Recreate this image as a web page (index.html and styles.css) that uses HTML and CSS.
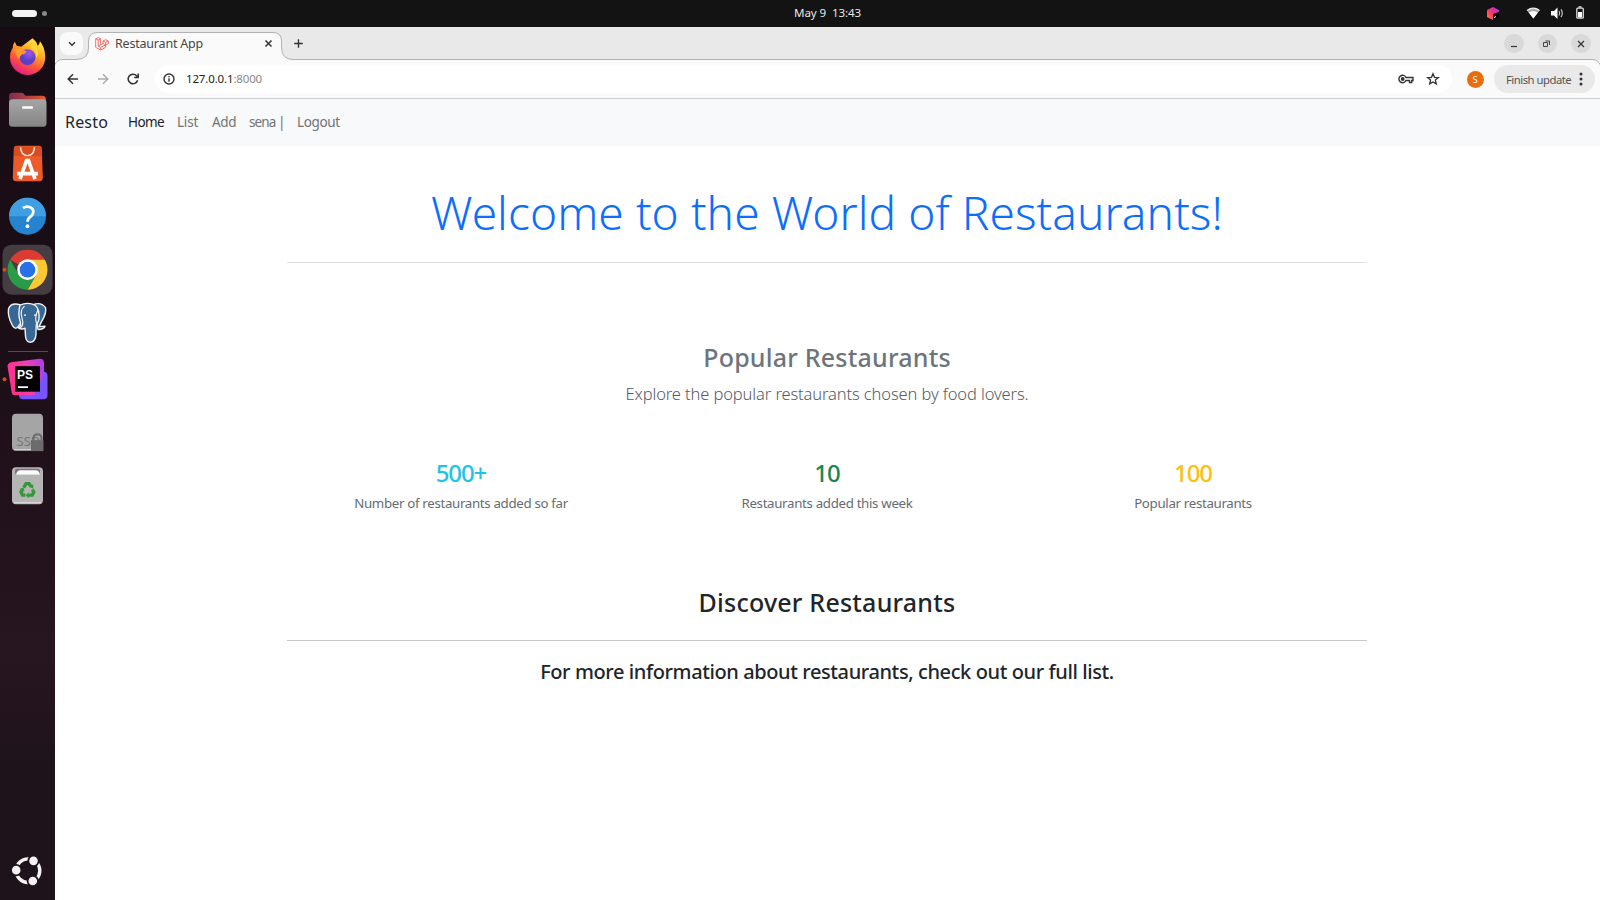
FILE: index.html
```html
<!DOCTYPE html>
<html lang="en">
<head>
<meta charset="utf-8">
<title>Restaurant App</title>
<link rel="stylesheet" href="styles.css">
</head>
<body>
<div class="desktop">
  <header class="topbar">
    <div class="spaces"><i class="pill"></i><i class="dot"></i></div>
    <div class="clock">May 9&nbsp; 13:43</div>
    <svg class="tray" width="120" height="27" viewBox="0 0 120 27">
      <defs><linearGradient id="tb" x1="0" y1="1" x2="1" y2="0"><stop offset="0" stop-color="#ff8a35"/><stop offset=".45" stop-color="#fb3569"/><stop offset="1" stop-color="#a02ff5"/></linearGradient></defs>
      <path d="M7 10 13 7l6 3v3l-6 3v4l-6-3z" fill="url(#tb)"/><path d="M13 14l6-2v5l-6 3z" fill="#000"/><path d="M14 17.500l2-1" stroke="#fff"/>
      <path d="M47 10.500q6.300-4.500 12.600 0L53.300 18.500z" fill="#aaa"/><path d="M48.800 12.600q4.500-2.600 9 0L53.300 18.500z" fill="#fff"/><path d="M47 10.500q6.300-4.600 12.600 0" stroke="#eee" fill="none" stroke-width="1.300"/>
      <path d="M71 11h3l3.500-3.500v11.500L74 15.500h-3z" fill="#fff"/><path d="M79 11q1.600 2.200 0 4.500M81 9.300q2.600 4 0 7.800" stroke="#ccc" fill="none" stroke-width="1.200"/>
      <path d="M98.500 7h3" stroke="#ddd" stroke-width="1.500"/><rect x="96.800" y="8.200" width="6.500" height="10" rx="1" fill="none" stroke="#ddd" stroke-width="1.300"/><rect x="98" y="12" width="4" height="5.500" fill="#fff"/>
    </svg>
  </header>
  <div class="workspace">
    <aside class="dock">
      <svg class="slot" viewBox="0 0 55 53">
        <defs><linearGradient id="ff" x1=".8" y1="0" x2=".3" y2="1"><stop offset="0" stop-color="#fff24a"/><stop offset=".35" stop-color="#ffae22"/><stop offset=".65" stop-color="#ff5a36"/><stop offset="1" stop-color="#e6178b"/></linearGradient><radialGradient id="fp" cx=".6" cy=".25"><stop offset="0" stop-color="#a456f0"/><stop offset="1" stop-color="#5b3fc4"/></radialGradient></defs>
        <path d="M32.500 8q4 3 5.200 7.500 2-2 2.300-4.500 5 6 5.200 15.500A17.500 17.500 0 0 1 10 28q-.3-6 2.800-10.500 0-3.500 2-6l2 4 4.500 1.200Q27 12 32.500 8z" fill="url(#ff)"/>
        <circle cx="27.500" cy="27" r="8" fill="url(#fp)"/>
        <path d="M14 18.500q7-1 12.500 2.500-.8 3-4.500 3.200-2.500 2.200-2.500 5-3-1.500-3.500-5z" fill="#ff9a2b"/>
        <path d="M31 18q6 2.500 5 10 4-4 1-10-2-4-5-6z" fill="#ffd53a"/>
      </svg>
      <svg class="slot" viewBox="0 0 55 53">
        <defs><linearGradient id="fo" x1="0" x2="1"><stop offset="0" stop-color="#7b2a55"/><stop offset="1" stop-color="#e55a28"/></linearGradient><linearGradient id="fg" x1="0" y1="0" x2="0" y2="1"><stop offset="0" stop-color="#a5a5a5"/><stop offset="1" stop-color="#858585"/></linearGradient></defs>
        <path d="M9 13q0-3.500 3.500-3.500h9q2 0 3 2l1 1H42q4 0 4 4v10H9z" fill="url(#fo)"/><rect x="9" y="16" width="37.500" height="27.500" rx="3.500" fill="url(#fg)"/><rect x="22" y="23" width="11" height="2.600" rx="1" fill="#fff"/>
      </svg>
      <svg class="slot" viewBox="0 0 55 53">
        <path d="M17 9.500h21.500q3.200 0 3.300 3l1 29q0 3.500-3.500 3.500h-23q-3.500 0-3.500-3.500l1-29q.2-3 3.200-3z" fill="#ec5b29"/><path d="M14 10.500h27.500v9.500H14z" fill="#d94c1f"/><path d="M20.500 11q.5 8.500 7 8.500t7-8.500" fill="none" stroke="#ffe9df" stroke-width="1.400"/><path d="M20 43 26.500 24.500h2L35 43M17 37.500h21" fill="none" stroke="#fff" stroke-width="3.600"/>
      </svg>
      <svg class="slot" viewBox="0 0 55 53">
        <circle cx="27.500" cy="27" r="18.500" fill="#2583d0"/><path d="M9 27a18.500 18.500 0 0 1 37 0z" fill="#409fe2"/><path d="M23 19q3-2.300 6.500-1.200 4.500 1.700 3.700 5.700-.5 2.300-3 4.200-2.700 2-2.700 5" fill="none" stroke="#fff" stroke-width="2.700"/><circle cx="27.500" cy="37" r="1.900" fill="#fff"/>
      </svg>
      <svg class="slot" viewBox="0 0 55 53">
        <rect x="2.500" y="1.500" width="50" height="50" rx="9" fill="#443d42"/><circle cx="4.500" cy="26.500" r="2" fill="#d9471a"/>
        <path d="M27.500 26.500 10.200 16.500A20 20 0 0 1 44.800 16.500z" fill="#dd3b30"/><path d="M27.500 16.500H44.800A20 20 0 0 1 27.500 46.500L36.200 31.500z" fill="#fcc934"/><path d="M10.200 16.500A20 20 0 0 0 27.500 46.500L36.200 31.500H18.800z" fill="#2a9b48"/><circle cx="27.500" cy="26.500" r="10.300" fill="#fff"/><circle cx="27.500" cy="26.500" r="7.800" fill="#2671e5"/>
      </svg>
      <svg class="slot" viewBox="0 0 55 53">
        <g fill="#376895" stroke="#f3f3f3" stroke-width="1.400" stroke-linejoin="round"><path d="M20 8.500q-9-2.500-11.500 4-1 8 4 17 3 4.500 5.500 1l3-4z"/><path d="M33 8.500q8-3 12.500 3 1.500 5-4 14l-2.500 5 6-.5q-1.500 3.500-7 3.300z"/><path d="M20 9q6-3 12.500-1 6.500 2 6.500 11 .5 6-2.500 9-.5 3-.5 10-.5 7.500-5 8-5 .5-5.500-6L25 32q-3 2-7-.5 3-1 2.500-5-3-9-.5-17.500z"/></g>
        <path d="M24.500 10q-5 4-2.500 12t-2.500 10M38 14q-4 7-1 15" fill="none" stroke="#f3f3f3" stroke-width="1.200"/><path d="M24 19h2M34 19h2" stroke="#fff" stroke-width="1.300"/>
      </svg>
      <hr class="dock-line">
      <svg class="slot" viewBox="0 0 55 53">
        <defs><linearGradient id="pa" x1="0" y1=".3" x2="1" y2="0"><stop offset="0" stop-color="#fc318c"/><stop offset=".5" stop-color="#f440ae"/><stop offset="1" stop-color="#a63cf0"/></linearGradient></defs>
        <circle cx="4.500" cy="26" r="2" fill="#d9471a"/><rect x="19" y="18.500" width="28.500" height="27.500" rx="4" fill="#7654ff"/><path d="M11 9 40 5.500q4 0 4 4V20L34 42H15q-3.500 0-3.500-4L7.500 13q0-3 3.500-4z" fill="url(#pa)"/><rect x="15" y="13" width="25" height="25.500" fill="#000"/><text x="17" y="25.500" class="ps">PS</text><path d="M18 34h10" stroke="#fff" stroke-width="1.800"/>
      </svg>
      <svg class="slot" viewBox="0 0 55 53">
        <rect x="12" y="7.500" width="31" height="37" rx="4" fill="#a5a5a5"/><path d="M14 43.500h27" stroke="#d0d0d0" stroke-width="1.200"/><text x="16.500" y="39.500" class="ssd">SSD</text><path d="M33.500 34v-2a4 4 0 0 1 8 0v2" fill="none" stroke="#6b6b6b" stroke-width="2"/><rect x="31" y="34" width="12.500" height="11" fill="#6b6b6b"/>
      </svg>
      <svg class="slot" viewBox="0 0 55 53">
        <rect x="12" y="8" width="31" height="37" rx="4" fill="#b5b5b5"/><path d="M14 43.500h27" stroke="#d8d8d8" stroke-width="1.200"/><rect x="15" y="9.500" width="25" height="6" rx="2" fill="#777"/><path d="M16 15.500q1-4.500 4-4.500h16q3 0 4 4.500z" fill="#fafafa"/>
        <g fill="none" stroke="#2f9a35" stroke-width="3.300"><path d="M23.600 28.500l2.500-4h3l1.800 3"/><path d="M32.300 30.500l1.500 2.500-1.500 3h-3.500"/><path d="M25.500 36h-3L21 33l1.400-2.500"/></g><path d="M33.200 25v4.500l-4-2zM28.800 33v6l-3-3zM19.500 29.500l4-1 1 3.800z" fill="#2f9a35"/>
      </svg>
      <svg class="slot apps" viewBox="0 0 55 53">
        <circle cx="28" cy="26.500" r="11.800" fill="none" stroke="#f4f2f3" stroke-width="3.400"/><g fill="#f4f2f3" stroke="#1e131b" stroke-width="1.800"><circle cx="16.200" cy="26" r="5.200"/><circle cx="33.500" cy="16.700" r="5.200"/><circle cx="32.800" cy="36.800" r="5.200"/></g>
      </svg>
    </aside>
    <section class="window">
      <svg class="frame" width="1545" height="45" viewBox="0 0 1545 45"><path d="M-1 46V41Q0 32.500 8 32.500H22Q33.500 32 33.500 21V14Q34 5.500 42 5.500H218Q226.500 5.500 226.500 14V21Q227 32.500 238 32.500H1537Q1545 32.500 1546 41V46z" fill="#fafafa" stroke="#b2b2b2"/></svg>
      <div class="tabs">
        <div class="tab-search"><svg width="10" height="8" viewBox="0 0 10 8"><path d="M2 2.300l3 3 3-3" fill="none" stroke="#333" stroke-width="1.500"/></svg></div>
        <div class="tab">
          <svg width="14" height="14" viewBox="0 0 14 14" fill="none" stroke="#f0645b" stroke-width=".9" stroke-linejoin="round"><path d="M.7 1.800 3.200.6l2.400 1.200v6L8 6.500V4l2.600-1.300L13.300 4v2.700L10.700 8v2.300L5.600 13 .7 10.300zM.7 1.800 3.200 3l2.400-1.200M3.200 3v6L5.600 10.300 10.700 8M8 4l2.700 1.300L13.300 4M10.700 5.300V8L8 6.500M5.600 10.300V13M5.600 7.800 3.200 9"/></svg>
          <span class="tab-title">Restaurant App</span>
          <svg class="tab-x" width="9" height="9" viewBox="0 0 9 9"><path d="M1.500 1.500l6 6m0-6l-6 6" stroke="#333" stroke-width="1.500"/></svg>
        </div>
        <svg class="plus" width="11" height="11" viewBox="0 0 11 11"><path d="M5.500 1.200v8.600M1.200 5.500h8.600" stroke="#333" stroke-width="1.400"/></svg>
        <div class="controls">
          <span class="ctl"><svg width="10" height="10" viewBox="0 0 10 10"><path d="M2 7.500h6" stroke="#333" stroke-width="1.200"/></svg></span>
          <span class="ctl"><svg width="10" height="10" viewBox="0 0 10 10" fill="none" stroke="#444"><path d="M1.500 3.500h4v4h-4zM3.500 2h4v4"/></svg></span>
          <span class="ctl"><svg width="10" height="10" viewBox="0 0 10 10"><path d="M2 2l6 6m0-6l-6 6" stroke="#333" stroke-width="1.200"/></svg></span>
        </div>
      </div>
      <div class="toolbar">
        <svg class="nav-ico" width="14" height="14" viewBox="0 0 14 14" fill="none" stroke="#333" stroke-width="1.500"><path d="M12 7H2.500M7 2.200 2.200 7 7 11.800"/></svg>
        <svg class="nav-ico" width="14" height="14" viewBox="0 0 14 14" fill="none" stroke="#aaa" stroke-width="1.400"><path d="M2 7h9.500M7 2.200 11.800 7 7 11.800"/></svg>
        <svg class="nav-ico" width="14" height="14" viewBox="0 0 14 14" fill="none" stroke="#333" stroke-width="1.500"><path d="M11.600 8.300A4.800 4.800 0 1 1 10.600 3.800L12 5.200M12.200 1.500v4H8.200"/></svg>
        <div class="omnibox">
          <svg width="12" height="12" viewBox="0 0 12 12"><circle cx="6" cy="6" r="5" fill="none" stroke="#333" stroke-width="1.400"/><path d="M6 5.300v3.500M6 3v1.300" stroke="#333" stroke-width="1.400"/></svg>
          <span class="url">127.0.0.1<b>:8000</b></span>
          <svg class="key" width="16" height="12" viewBox="0 0 16 12" fill="none" stroke="#333" stroke-width="1.400"><path d="M8 4.500A3.700 3.700 0 1 0 8 7.500h3.500V9.500h2.200V7.500H15v-3z"/><circle cx="4.700" cy="6" r="1.200" fill="#333"/></svg>
          <svg width="14" height="14" viewBox="0 0 14 14"><path d="M7 1.700 8.500 5.300l3.900.3-3 2.500.9 3.800L7 9.900l-3.300 2 .9-3.800-3-2.500 3.900-.3z" fill="none" stroke="#333" stroke-width="1.300"/></svg>
        </div>
        <span class="avatar">S</span>
        <span class="update"><span>Finish update</span><svg width="4" height="14" viewBox="0 0 4 14" fill="#333"><circle cx="2" cy="2" r="1.500"/><circle cx="2" cy="7" r="1.500"/><circle cx="2" cy="12" r="1.500"/></svg></span>
      </div>
      <nav class="navbar">
        <a class="brand">Resto</a><a class="active">Home</a><a class="list">List</a><a class="add">Add</a><a class="user">sena |</a><a class="out">Logout</a>
      </nav>
      <main class="page">
        <h1>Welcome to the World of Restaurants!</h1>
        <hr class="rule light">
        <h2 class="popular">Popular Restaurants</h2>
        <p class="lead">Explore the popular restaurants chosen by food lovers.</p>
        <div class="stats">
          <div><h3 class="info">500+</h3><p>Number of restaurants added so far</p></div>
          <div><h3 class="success">10</h3><p>Restaurants added this week</p></div>
          <div><h3 class="warning">100</h3><p>Popular restaurants</p></div>
        </div>
        <h2 class="discover">Discover Restaurants</h2>
        <hr class="rule">
        <h4>For more information about restaurants, check out our full list.</h4>
      </main>
    </section>
  </div>
</div>
</body>
</html>
```
FILE: styles.css
```css
*{box-sizing:border-box}
body,h1,h2,h3,h4,p{margin:0;font-weight:400}
body{font-family:"Noto Sans","Open Sans",sans-serif;background:#fff;color:#212529}
svg{display:block;flex:none}
.desktop{width:1600px;height:900px;display:flex;flex-direction:column;overflow:hidden}
.topbar{height:27px;background:#131313;display:grid;grid-template-columns:1fr auto 1fr;align-items:center;color:#e6e6e6}
.spaces{display:flex;align-items:center;gap:5px;padding-left:12px}
.pill{width:25px;height:7px;border-radius:4px;background:#f2f2f2}
.dot{width:5px;height:5px;border-radius:50%;background:#888}
.clock{font-size:11.6px;letter-spacing:-.1px;padding:0 0 2px 55px;line-height:24px;white-space:pre}
.tray{justify-self:end}
.workspace{flex:1;display:flex;min-height:0}
.dock{width:55px;background:linear-gradient(#170b14,#1b0e17 35%,#27151f 72%,#1e131b 85%);display:flex;flex-direction:column;padding:2.5px 0 3px}
.slot{width:55px;height:53.3px}
.apps{margin-top:auto}
.dock-line{width:40px;height:1px;border:0;background:#514951;margin:1.5px auto .8px}
.ps{font:700 12px "Liberation Sans",sans-serif;fill:#fff}
.ssd{font:13px "Noto Sans",sans-serif;fill:#777}
.window{width:1545px;position:relative;display:flex;flex-direction:column;background:#fff}
.frame{position:absolute;left:0;top:0}
.tabs{height:33px;background:#e9e9e9;display:flex;align-items:center;padding-left:5px}
.tabs>*,.toolbar>*{position:relative}
.tab-search{width:23px;height:23px;border-radius:8px;background:#fafafa;display:flex;align-items:center;justify-content:center}
.tab{width:193px;display:flex;align-items:center;margin-left:6px;padding:0 9px 0 6px}
.tab-title{font-size:12.5px;letter-spacing:-.2px;margin-left:6px;color:#474747;line-height:20px}
.tab-x{margin-left:auto}
.plus{margin-left:11px}
.controls{display:flex;gap:14px;margin-left:auto;margin-right:9.5px}
.ctl{width:19.5px;height:19.5px;border-radius:50%;background:#d9d9d9;display:flex;align-items:center;justify-content:center}
.toolbar{height:39px;display:flex;align-items:center;padding-left:11px;border-bottom:1px solid #cfcfcf;background:linear-gradient(#fafafa,#fafafa) 0 12px/100% 27px no-repeat}
.nav-ico{margin-right:16px}
.omnibox{width:1297px;height:28px;border-radius:14px;background:#fff;display:flex;align-items:center;padding:0 12px 0 8px;margin-left:-1px}
.url{font-size:11.5px;letter-spacing:-.15px;margin-left:11px;color:#222;flex:1;line-height:18px;padding-bottom:1px}
.url b{font-weight:400;color:#888}
.key{margin-right:12px}
.avatar{width:17px;height:17px;border-radius:50%;background:#ed6c0a;color:#fff;font-size:9.5px;line-height:17px;text-align:center;margin-left:14.5px}
.update{width:101px;height:28px;border-radius:14px;background:#e9e9e9;display:flex;align-items:center;justify-content:space-between;font-size:11.3px;letter-spacing:-.5px;color:#555;padding:0 12px 0 12.5px;margin-left:10px}
.navbar{height:47px;background:#f8f9fa;display:flex;align-items:center;padding:0 0 2px 10px;font-size:13.5px;line-height:20px;color:#717375}
.brand{font-size:16px;letter-spacing:.18px;color:#212529;width:63px}
.active{letter-spacing:-.6px;color:#222;width:49px}
.list{letter-spacing:-.2px;width:35px}
.add{letter-spacing:-.4px;width:37px}
.user{letter-spacing:-.9px;width:48px}
.out{letter-spacing:-.35px}
.page{width:1080px;margin:0 auto;padding-top:38px;display:flex;flex-direction:column;text-align:center;position:relative;left:-.5px}
h1{font-size:46px;line-height:56px;font-weight:300;letter-spacing:.09px;color:#0d6efd}
.rule{width:100%;height:1px;border:0;margin:0;background:#c8c9ca}
.light{margin-top:22px;background:#dedfe0}
h2{font-size:25px;line-height:30px;font-weight:500;letter-spacing:.22px}
.popular{margin-top:79px;color:#6c757d}
.lead{font-size:16.5px;line-height:26px;font-weight:300;letter-spacing:-.11px;color:#555b61;margin-top:9px}
.stats{display:grid;grid-template-columns:repeat(3,1fr);margin:52px -9px 0}
h3{font-size:24px;line-height:28px;font-weight:500;letter-spacing:-1.1px}
.stats p{font-size:13.3px;line-height:22px;letter-spacing:-.33px;margin-top:4.5px;color:#666c72}
.info{color:#1fc3e8}.success{color:#198754}.warning{color:#fcbf12}
.discover{margin:73px 0 23.5px}
h4{font-size:20px;line-height:24px;font-weight:500;letter-spacing:-.4px;margin-top:19px}
```
